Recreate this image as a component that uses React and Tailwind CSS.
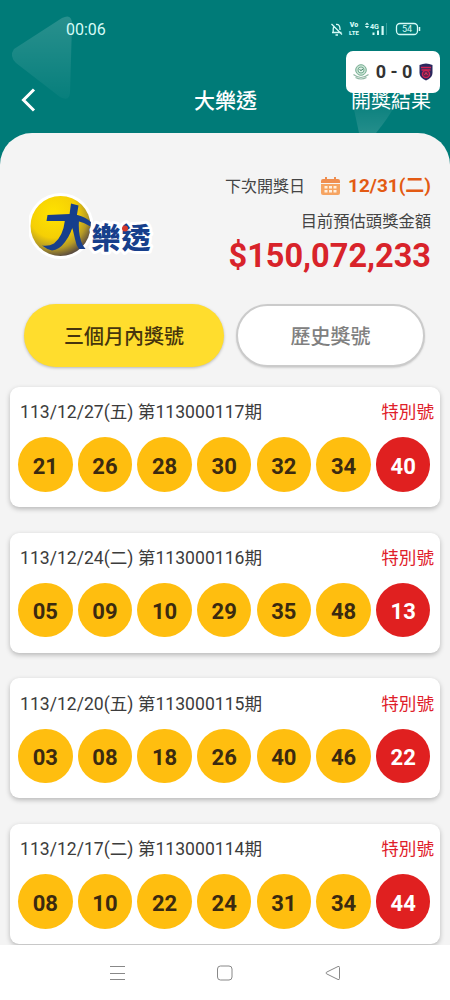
import React from 'react';

const draws = [
  { date: '113/12/27(五)', term: '113000117', numbers: ['21', '26', '28', '30', '32', '34'], special: '40' },
  { date: '113/12/24(二)', term: '113000116', numbers: ['05', '09', '10', '29', '35', '48'], special: '13' },
  { date: '113/12/20(五)', term: '113000115', numbers: ['03', '08', '18', '26', '40', '46'], special: '22' },
  { date: '113/12/17(二)', term: '113000114', numbers: ['08', '10', '22', '24', '31', '34'], special: '44' },
];

const StatusBar = () => (
  <div className="flex h-[58px] items-center justify-between pl-[66px] pr-[27px] text-[#d5fbf7]">
    <span className="mt-px text-[16px] leading-none">00:06</span>
    <div className="flex h-[16px] items-center">
      {/* Muted bell */}
      <svg width="13" height="16" viewBox="0 0 13 16" fill="none" stroke="currentColor">
        <path d="M1 11.500h9.500M2.200 11V8q0-2 1.300-3M5 3.500Q9 3 9 8v1M4.500 14h2.500M.5 3l10.500 10.500" strokeWidth="1.300" />
      </svg>
      <span className="ml-[4px] flex w-[12px] flex-col items-center text-[7px] font-black leading-[8px]">
        <span>Vo</span>
        <span className="text-[6px]">LTE</span>
      </span>
      <svg className="ml-[4px]" width="23" height="16" viewBox="0 0 23 16" fill="currentColor">
        <path d="M3 1.500l2.200 2.300H.8z M3 7.200l2.200-2.300H.8z" />
        <text x="6" y="7.800" fontWeight="700" fontSize="8" textLength="9" lengthAdjust="spacingAndGlyphs">4G</text>
        <path d="M8.500 11.500h2V14h-2z M13 9.500h2V14h-2z M17.500 5h2.200v9h-2.200z" />
        <path d="M22 2h1v12h-1z" opacity=".25" />
      </svg>
      <svg className="ml-[8px]" width="28" height="16" viewBox="0 0 28 16" fill="none" stroke="currentColor">
        <rect x="1.500" y="2.500" width="21" height="11" rx="3.500" strokeWidth="1.300" />
        <path d="M24.500 6v4" strokeWidth="1.500" />
        <text x="7" y="11.300" fill="currentColor" stroke="none" fontSize="9" textLength="10">54</text>
      </svg>
    </div>
  </div>
);

const ScoreBadge = () => (
  <div className="absolute left-[346px] top-[51px] flex h-[42px] w-[94px] items-center justify-between rounded-[7px] bg-white pl-[6px] pr-[6px]">
    <svg width="18" height="18" viewBox="0 0 18 18" fill="none">
      <circle cx="9" cy="7" r="5.300" fill="#c8e2d3" stroke="#79af94" />
      <circle cx="9" cy="7" r="3" fill="#e2f2e9" stroke="#5f9e81" strokeWidth=".8" />
      <path d="M7.500 6.500l1.500 1 2-1.500" stroke="#3c7c60" />
      <path d="M1.500 11.500q7.500 6 15 0M3.500 14.500q5.500 3 11 0" stroke="#91b7a4" strokeWidth="1.100" />
    </svg>
    <span className="text-[18px] font-bold leading-none text-[#333] whitespace-nowrap">0 - 0</span>
    <svg width="16" height="18" viewBox="0 0 16 18" fill="none">
      <path d="M1.500 2Q8-1 14.500 2v8Q14.500 15 8 17.500 1.500 15 1.500 10z" fill="#2b285e" />
      <path d="M3 4.500h10M3.500 7h9" stroke="#d32252" strokeWidth="1.300" />
      <circle cx="8" cy="11" r="3.600" fill="#64234f" stroke="#d32252" strokeWidth="1.300" />
      <path d="M6.500 12l1.500-2.500L9.500 12" stroke="#e13a5e" />
    </svg>
  </div>
);

const Logo = () => (
  <svg className="-ml-px mt-px" width="127" height="72" viewBox="0 0 127 72">
    <defs>
      <radialGradient id="ball" cx="38%" cy="30%" r="72%">
        <stop offset="0" stopColor="#ffe300" />
        <stop offset=".55" stopColor="#f5cf05" />
        <stop offset=".8" stopColor="#b59a25" />
        <stop offset="1" stopColor="#5a4c40" />
      </radialGradient>
    </defs>
    <circle cx="31.500" cy="37" r="33" fill="#fff" />
    <circle cx="31.500" cy="37" r="30" fill="url(#ball)" />
    <text
      x="62.500" y="60" fontSize="29" fontWeight="900" fill="#173f8c" stroke="#fff" strokeWidth="6"
      strokeLinejoin="round" paintOrder="stroke" textLength="59"
    >
      樂透
    </text>
    {/* Running figure: torso and head, arms, then the two legs */}
    <g fill="#173f8c">
      <path d="M42 14.500l7.500 2-2.500 15-4 9-7-3q4-6 4.500-12z" />
      <path d="M18.500 26l22-1 8 1q8 2 13.500 7l-.5 4.500q-6-4-13-5.500H17.500z" />
      <path d="M36 31h9q-2 13-9 22-6 8-13 8.500-5-1-10-5 7 1 12-2 9-7 11-23.500z" />
      <path d="M42 33l8-2q-1 11 2 21 1 4 4.500 8h-6.500q-3-4-4-10z" />
    </g>
    <circle cx="96" cy="39.500" r="3" fill="#d5392b" />
  </svg>
);

const CalendarIcon = () => (
  <svg width="19" height="18" viewBox="0 0 19 18">
    <path d="M4 0h2v2h7V0h2v2h2a2 2 0 0 1 2 2v2H0V4a2 2 0 0 1 2-2h2z" fill="#ef8e50" />
    <path d="M0 7h19v9a2 2 0 0 1-2 2H2a2 2 0 0 1-2-2z" fill="#f6a462" />
    <path d="M3.500 9h3v2.500h-3z M8 9h3v2.500H8z M12.500 9h3v2.500h-3z M3.500 13h3v2.500h-3z M8 13h3v2.500H8z M12.500 13h3v2.500h-3z" fill="#fff0df" />
  </svg>
);

const Ball = ({ value, special }) => (
  <span
    className={
      special
        ? 'flex size-[54.500px] items-center justify-center rounded-full bg-[#e02020] pt-[3px] text-[22px] font-bold text-white'
        : 'flex size-[54.500px] items-center justify-center rounded-full bg-[#ffbe0f] pt-[3px] text-[22px] font-bold text-[#3b2a10]'
    }
  >
    {value}
  </span>
);

const DrawCard = ({ draw }) => (
  <div className="h-[120px] shrink-0 rounded-[9px] bg-white pt-[13px] shadow-[0_2px_5px_rgba(0,0,0,0.25)]">
    <div className="flex h-[26px] items-center justify-between pl-[10px] pr-[6px] text-[17.600px] leading-none">
      <span className="text-[#3c3c3c]">{draw.date} 第{draw.term}期</span>
      <span className="text-[#e0202a]">特別號</span>
    </div>
    <div className="mt-[11.300px] flex justify-between pl-[8px] pr-[9.500px]">
      {draw.numbers.map((n) => <Ball key={n} value={n} />)}
      <Ball value={draw.special} special />
    </div>
  </div>
);

const App = () => (
  <div className="relative flex h-[1000px] w-[450px] flex-col overflow-hidden bg-[#007b78] font-[Roboto,'Noto_Sans_CJK_TC',sans-serif]">
    {/* Header decoration */}
    <svg className="absolute left-0 top-0" width="450" height="160" viewBox="0 0 450 160">
      <defs>
        <linearGradient id="fade" x1="0" y1="0" x2="0" y2="1">
          <stop offset="0" stopColor="#fff" stopOpacity=".16" />
          <stop offset="1" stopColor="#fff" stopOpacity=".03" />
        </linearGradient>
        <linearGradient id="fadeRight" x1="0" y1="0" x2="0" y2="1">
          <stop offset="0" stopColor="#fff" stopOpacity=".03" />
          <stop offset="1" stopColor="#fff" stopOpacity=".14" />
        </linearGradient>
      </defs>
      <path d="M14 49L62 18Q72 13 72 24L70 93Q69 102 60 97L16 63Q9 56 14 49z" fill="url(#fade)" />
      <path d="M352 100h45q-4 12-21 33h-17z" fill="url(#fadeRight)" />
    </svg>

    <header className="relative h-[133px] shrink-0">
      <StatusBar />
      <div className="flex h-[84px] items-center justify-between pl-[21px] pr-[19px] text-white">
        <svg width="15" height="24" viewBox="0 0 15 24" fill="none" stroke="currentColor" strokeWidth="3">
          <path d="M13 1.500L2.500 12 13 22.500" />
        </svg>
        <span className="ml-[64px] mt-[3px] text-[21px] font-medium">大樂透</span>
        <span className="mt-[2px] text-[20px]">開獎結果</span>
      </div>
      <ScoreBadge />
    </header>

    <main className="relative flex h-[812px] shrink-0 flex-col overflow-hidden rounded-t-[32px] bg-[#f4f4f4]">
      <section className="flex h-[171px] shrink-0 justify-between pl-[30px] pr-[19px]">
        <div className="pt-[55px]">
          <Logo />
        </div>
        <div className="flex flex-col items-end pt-[40px]">
          <div className="flex h-[26px] items-center text-[#444]">
            <span className="mt-px text-[16px]">下次開獎日</span>
            <span className="ml-[16px]"><CalendarIcon /></span>
            <span className="ml-[8px] mt-px text-[19px] font-bold text-[#e35a13]">12/31(二)</span>
          </div>
          <div className="mt-[10px] h-[26px] text-[16.300px] leading-[26px] text-[#444]">目前預估頭獎金額</div>
          <div className="text-[32.500px] font-bold leading-[42px] text-[#d8232a]">$150,072,233</div>
        </div>
      </section>

      <div className="flex h-[63px] shrink-0 gap-[12px] px-[24px]">
        <button className="w-[200px] rounded-full bg-[#ffdd2d] pt-[2px] text-[20px] font-medium text-[#46350d] shadow-[0_1px_3px_rgba(0,0,0,0.25)]">
          三個月內獎號
        </button>
        <button className="w-[189px] rounded-full border-2 border-[#cbcbcb] bg-white pt-[2px] text-[20px] font-medium text-[#808080] shadow-[0_1px_2px_rgba(0,0,0,0.15)]">
          歷史獎號
        </button>
      </div>

      <div className="mt-[20px] flex flex-col gap-[25.700px] px-[10px]">
        {draws.map((draw) => <DrawCard key={draw.term} draw={draw} />)}
      </div>
    </main>

    {/* Android navigation */}
    <nav className="relative flex h-[55px] shrink-0 items-center justify-between bg-white pl-[110px] pr-[110px]">
      <svg width="15" height="16" viewBox="0 0 15 16" fill="none" stroke="#888">
        <path d="M0 1.500h15M0 8.500h15M0 14.500h15" />
      </svg>
      <svg width="16" height="16" viewBox="0 0 16 16" fill="none" stroke="#888">
        <rect x=".5" y="1" width="14.500" height="14" rx="3" />
      </svg>
      <svg width="15" height="16" viewBox="0 0 15 16" fill="none" stroke="#888">
        <path d="M13 1.500L1.500 7.200q-1 .8 0 1.600L13 14.500q1.500.5 1.500-1V2.500q0-1.500-1.500-1z" />
      </svg>
    </nav>
  </div>
);

export default App;
